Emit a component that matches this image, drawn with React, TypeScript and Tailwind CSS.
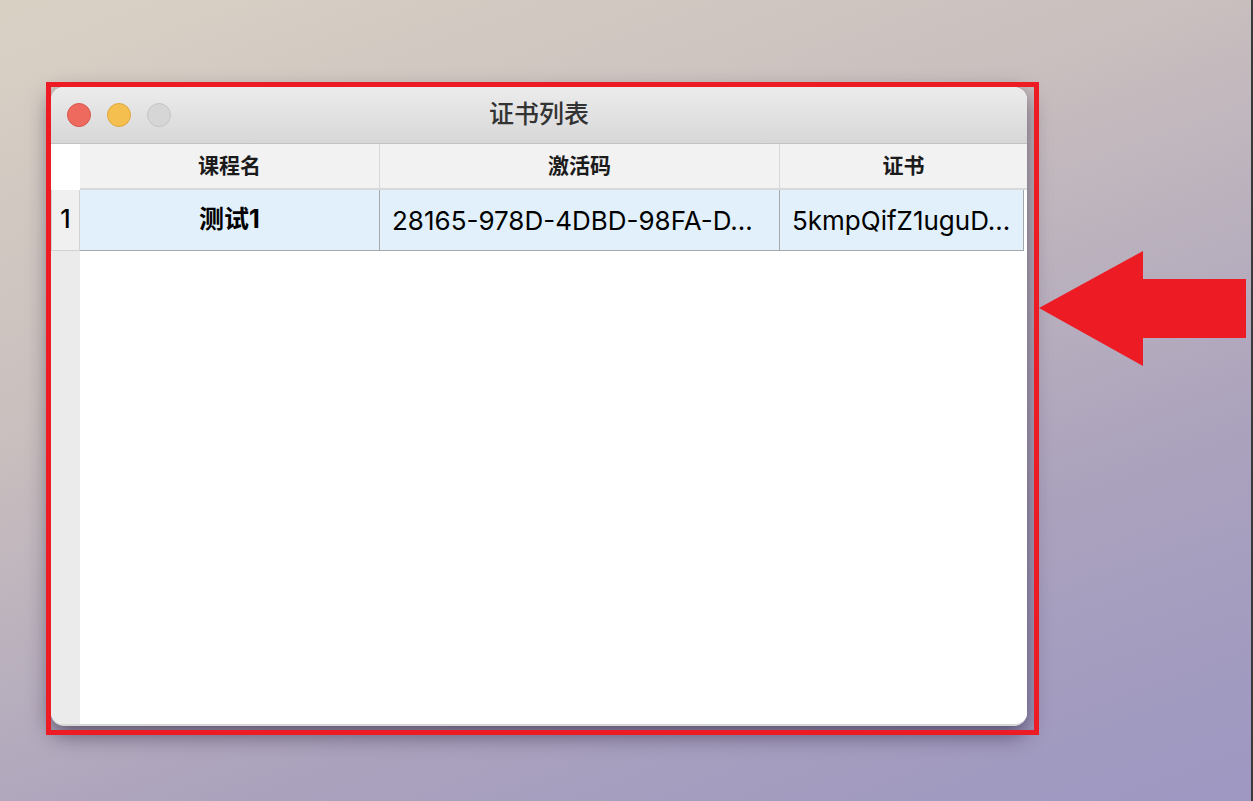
import React from "react";

/**
 * Desktop screenshot: a small macOS-style "证书列表" window holding a
 * one-row certificate table, with a red annotation frame and arrow.
 */

const FONT = {
  fontFamily: 'Inter, "Noto Sans CJK SC", sans-serif',
};

const rows = [
  {
    course: "测试1",
    code: "28165-978D-4DBD-98FA-D...",
    cert: "5kmpQifZ1uguD...",
  },
];

function TrafficLights() {
  return (
    <div className="flex items-center gap-4 pl-4">
      <span className="h-6 w-6 rounded-full border border-[#d9574c] bg-[#ee6a5f]" />
      <span className="h-6 w-6 rounded-full border border-[#dea73e] bg-[#f5bf4f]" />
      <span className="h-6 w-6 rounded-full border border-[#c4c4c4] bg-[#d6d6d6]" />
    </div>
  );
}

function CertTable() {
  return (
    <div className="flex min-h-0 flex-1">
      {/* row header column */}
      <div className="flex w-[29px] shrink-0 flex-col bg-[#ebebeb]">
        <div className="h-[46px] bg-white" />
        {rows.map((_, i) => (
          <div
            key={i}
            className="flex h-[61px] items-center justify-center border border-t-0 border-[#d2d2d2] bg-[#f0f0f0] text-[25px] font-medium text-black"
          >
            {i + 1}
          </div>
        ))}
      </div>

      {/* table body */}
      <div className="flex flex-1 flex-col bg-white">
        <div className="flex h-[46px] shrink-0 bg-[#f2f2f2] text-[21px] font-bold text-[#1b1b1b]">
          <div className="flex w-[300px] items-center justify-center border-r border-b-2 border-[#d9d9d9]">
            课程名
          </div>
          <div className="flex w-[400px] items-center justify-center border-r border-b-2 border-[#d9d9d9]">
            激活码
          </div>
          <div className="flex flex-1 items-center justify-center border-b-2 border-[#d9d9d9]">
            证书
          </div>
        </div>
        {rows.map((r, i) => (
          <div
            key={i}
            className="mr-[3px] flex h-[61px] shrink-0 border-b border-r border-[#a8a8a8] bg-[#e1f0fa] text-[26px] text-black"
          >
            <div className="flex w-[300px] items-center justify-center border-r border-[#a8a8a8] text-[25px] font-bold">
              {r.course}
            </div>
            <div className="flex w-[400px] items-center overflow-hidden whitespace-nowrap border-r border-[#a8a8a8] pl-3">
              {r.code}
            </div>
            <div className="flex flex-1 items-center overflow-hidden whitespace-nowrap pl-3">
              {r.cert}
            </div>
          </div>
        ))}
      </div>
    </div>
  );
}

export default function App() {
  return (
    <div
      className="relative h-[801px] w-[1253px] overflow-hidden bg-[linear-gradient(160deg,#dad1c5_0%,#c9bfbe_35%,#aba2bd_70%,#9d97c2_100%)]"
      style={FONT}
    >
      {/* window */}
      <div className="absolute left-[51px] top-[87px] flex h-[639px] w-[976px] flex-col overflow-hidden rounded-[13px] border-b-2 border-[#d6d6d6] bg-white shadow-[0_8px_22px_rgba(30,20,50,0.6)]">
        <div className="relative flex h-[57px] shrink-0 items-center border-b border-[#c2c2c2] bg-[linear-gradient(#ececec,#d7d7d7)]">
          <TrafficLights />
          <div className="absolute inset-0 flex items-center justify-center text-[25px] font-medium text-[#333333]">
            证书列表
          </div>
        </div>
        <CertTable />
      </div>

      {/* annotation frame */}
      <div className="absolute left-[46px] top-[82px] h-[653px] w-[993px] border-[5px] border-[#ed1c24]" />

      {/* annotation arrow */}
      <svg
        className="absolute left-0 top-0"
        width="1253"
        height="801"
        viewBox="0 0 1253 801"
      >
        <polygon
          points="1039,308 1143,251 1143,279 1246,279 1246,338 1143,338 1143,366"
          fill="#ed1c24"
        />
      </svg>

      {/* dark strip at right edge */}
      <div className="absolute right-0 top-0 h-full w-[2px] bg-[#3a3a3a]" />
    </div>
  );
}
